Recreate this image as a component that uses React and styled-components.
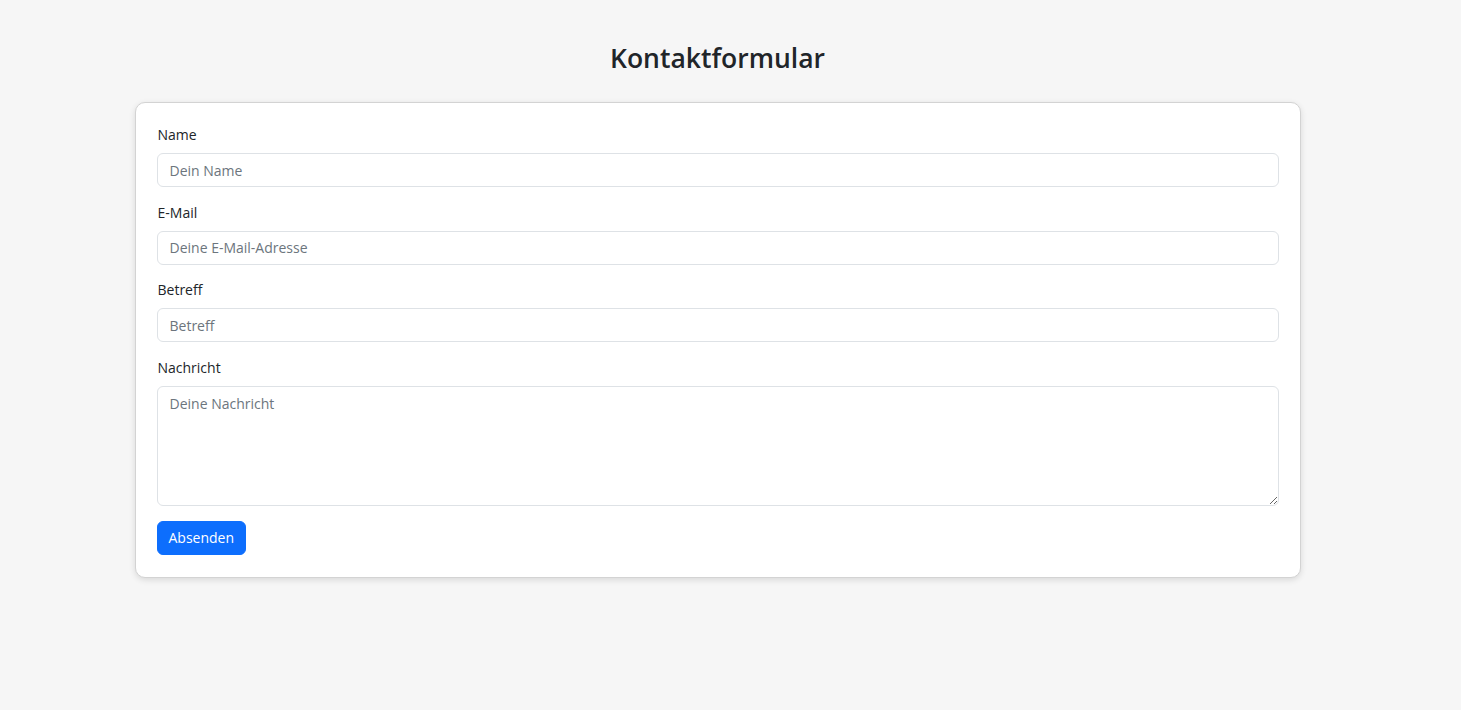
import React from "react";
import styled, { createGlobalStyle } from "styled-components";

const GlobalStyle = createGlobalStyle`
  html, body {
    margin: 0;
    padding: 0;
    background: #f6f6f6;
    font-family: "Segoe UI", "Open Sans", "Noto Sans", sans-serif;
    color: #212529;
  }

  * {
    box-sizing: border-box;
  }
`;

const Page = styled.div`
  min-height: 710px;
  padding: 40px 26px 40px 0;
`;

const Container = styled.div`
  max-width: 1166px;
  margin: 0 auto;
`;

const Title = styled.h2`
  margin: 0 0 26px 0;
  font-size: 26.5px;
  line-height: 36px;
  font-weight: 600;
  text-align: center;
  color: #212529;
`;

const Card = styled.form`
  background: #ffffff;
  border: 1px solid #d3d3d3;
  border-radius: 10px;
  box-shadow: 0 2px 6px rgba(0, 0, 0, 0.12);
  padding: 21px 21px 22px;
`;

const FieldGroup = styled.div`
  display: flex;
  flex-direction: column;
  margin-bottom: 14.67px;
`;

const Label = styled.label`
  font-size: 14px;
  line-height: 21px;
  margin-bottom: 8px;
  padding-left: 1px;
  color: #212529;
`;

const Input = styled.input`
  width: 100%;
  height: 34px;
  padding: 6px 12px;
  font-family: inherit;
  font-size: 14px;
  color: #212529;
  background: #fff;
  border: 1px solid #dee2e6;
  border-radius: 6px;
  outline: none;

  &::placeholder {
    color: #6c757d;
  }
`;

const TextArea = styled.textarea`
  width: 100%;
  height: 120px;
  padding: 6px 12px;
  font-family: inherit;
  font-size: 14px;
  line-height: 21px;
  color: #212529;
  background: #fff;
  border: 1px solid #dee2e6;
  border-radius: 6px;
  outline: none;
  resize: vertical;
  display: block;

  &::placeholder {
    color: #6c757d;
  }
`;

const SubmitButton = styled.button`
  height: 34px;
  padding: 0 11px;
  font-family: inherit;
  font-size: 14px;
  color: #fff;
  background: #0d6efd;
  border: 1px solid #0d6efd;
  border-radius: 6px;
  cursor: pointer;
`;

const fields = [
  { id: "name", label: "Name", placeholder: "Dein Name", type: "text" },
  { id: "email", label: "E-Mail", placeholder: "Deine E-Mail-Adresse", type: "email" },
  { id: "subject", label: "Betreff", placeholder: "Betreff", type: "text" },
];

const App = () => {
  return (
    <Page>
      <GlobalStyle />
      <Container>
        <Title>Kontaktformular</Title>
        <Card onSubmit={(event) => event.preventDefault()}>
          {fields.map((field) => (
            <FieldGroup key={field.id}>
              <Label htmlFor={field.id}>{field.label}</Label>
              <Input id={field.id} type={field.type} placeholder={field.placeholder} />
            </FieldGroup>
          ))}
          <FieldGroup>
            <Label htmlFor="message">Nachricht</Label>
            <TextArea id="message" placeholder="Deine Nachricht" />
          </FieldGroup>
          <SubmitButton type="submit">Absenden</SubmitButton>
        </Card>
      </Container>
    </Page>
  );
};

export default App;
